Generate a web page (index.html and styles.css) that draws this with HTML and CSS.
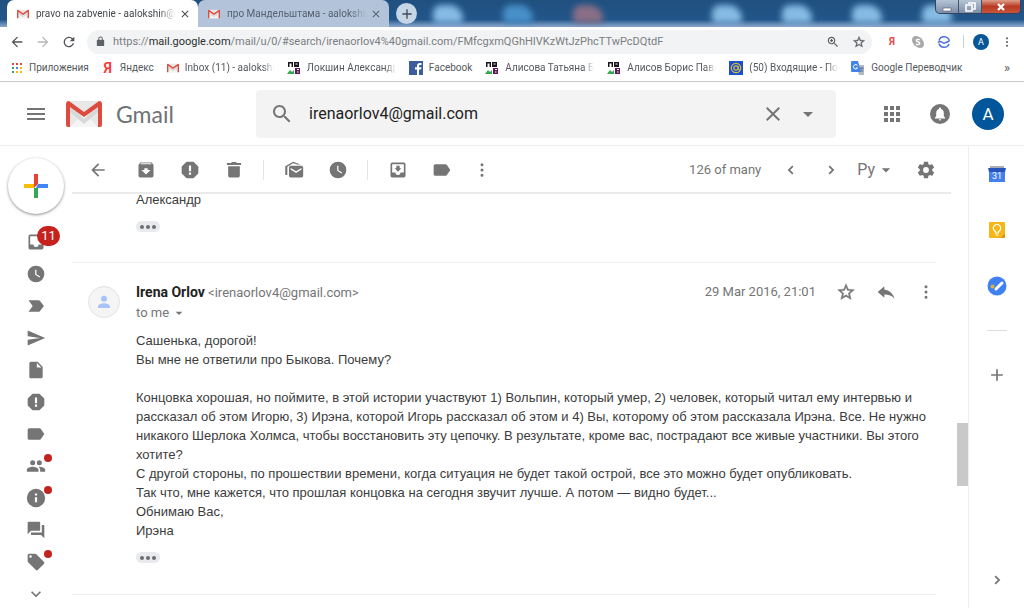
FILE: index.html
```html
<!DOCTYPE html>
<html lang="ru">
<head>
<meta charset="utf-8">
<title>pravo na zabvenie - Gmail</title>
<link rel="stylesheet" href="styles.css">
</head>
<body>
<svg class="defs" aria-hidden="true">
  <symbol id="gm" viewBox="0 0 36 26"><rect x="1" width="34" height="26" rx="2" fill="#e8e8e8"/><path d="M4 26 18 12 32 26z" fill="#f5f5f5"/><path d="M4 5 18 18 32 5v6L18 23 4 11z" fill="#d8d8d8"/><path d="M0 3Q0 0 3 0L18 11 33 0q3 0 3 3v21q0 2-2 2h-2V6L18 16 4 6v20H2q-2 0-2-2z" fill="#dd4b3e"/></symbol>
  <symbol id="back" viewBox="0 0 24 24"><path d="M20 11H7.83l5.59-5.59L12 4l-8 8 8 8 1.41-1.41L7.83 13H20z"/></symbol>
  <symbol id="fwd" viewBox="0 0 24 24"><path d="m12 4-1.41 1.41L16.17 11H4v2h12.17l-5.58 5.59L12 20l8-8z"/></symbol>
  <symbol id="reload" viewBox="0 0 24 24"><path d="M17.65 6.35A8 8 0 1 0 19.73 14h-2.08A6 6 0 1 1 12 6c1.66 0 3.14.69 4.22 1.78L13 11h7V4z"/></symbol>
  <symbol id="lock" viewBox="0 0 24 24"><path d="M18 8h-1V6A5 5 0 0 0 7 6v2H6a2 2 0 0 0-2 2v10c0 1.100.9 2 2 2h12a2 2 0 0 0 2-2V10a2 2 0 0 0-2-2zm-3 0H9V6a3 3 0 0 1 6 0z"/></symbol>
  <symbol id="close" viewBox="0 0 24 24"><path d="M19 6.410 17.590 5 12 10.590 6.410 5 5 6.410 10.590 12 5 17.590 6.410 19 12 13.410 17.590 19 19 17.590 13.410 12z"/></symbol>
  <symbol id="plus" viewBox="0 0 24 24"><path d="M19 13h-6v6h-2v-6H5v-2h6V5h2v6h6z"/></symbol>
  <symbol id="search" viewBox="0 0 24 24"><path d="M15.5 14h-.79l-.28-.27C15.41 12.59 16 11.11 16 9.5 16 5.91 13.09 3 9.5 3S3 5.91 3 9.5 5.91 16 9.5 16c1.61 0 3.09-.59 4.23-1.57l.27.28v.79l5 4.99L20.49 19zm-6 0C7.01 14 5 11.99 5 9.5S7.01 5 9.5 5 14 7.01 14 9.5 11.99 14 9.5 14z"/></symbol>
  <symbol id="zoom" viewBox="0 0 24 24"><use href="#search"/><path d="M8.500 7h2v1.500H12v2h-1.500V12h-2v-1.500H7v-2h1.500z"/></symbol>
  <symbol id="star" viewBox="0 0 24 24"><path d="m22 9.240-7.190-.62L12 2 9.190 8.630 2 9.240l5.460 4.730L5.820 21 12 17.270 18.180 21l-1.630-7.030zM12 15.400l-3.760 2.270 1-4.280-3.320-2.880 4.380-.38L12 6.100l1.710 4.040 4.380.38-3.320 2.880 1 4.280z" stroke="currentColor" stroke-width=".5"/></symbol>
  <symbol id="dots" viewBox="0 0 24 24"><path d="M12 7.500a1.800 1.800 0 1 0 0-3.600 1.800 1.800 0 0 0 0 3.600zm0 2.700a1.800 1.800 0 1 0 0 3.600 1.800 1.800 0 0 0 0-3.600zm0 6.300a1.800 1.800 0 1 0 0 3.600 1.800 1.800 0 0 0 0-3.600z"/></symbol>
  <symbol id="menu" viewBox="0 0 24 24"><path d="M3 18h18v-2H3zm0-5h18v-2H3zm0-7v2h18V6z"/></symbol>
  <symbol id="caret" viewBox="0 0 24 24"><path d="m7 10 5 5 5-5z"/></symbol>
  <symbol id="apps" viewBox="0 0 24 24"><path d="M4 8h4V4H4zm6 12h4v-4h-4zm-6 0h4v-4H4zm0-6h4v-4H4zm6 0h4v-4h-4zm6-10v4h4V4zm-6 4h4V4h-4zm6 6h4v-4h-4zm0 6h4v-4h-4z"/></symbol>
  <symbol id="bell" viewBox="0 0 24 24"><circle cx="12" cy="12" r="10"/><path d="M17 16.500H7v-1l1.200-1.200V11c0-2 1-3.600 2.800-4v-.6a1 1 0 0 1 2 0V7c1.800.4 2.800 2 2.800 4v3.300L17 15.500zM10.800 17.200h2.400a1.200 1.200 0 0 1-2.400 0z" fill="#fff"/></symbol>
  <symbol id="archive" viewBox="0 0 24 24"><path d="m20.540 5.230-1.390-1.680C18.880 3.210 18.470 3 18 3H6c-.47 0-.88.21-1.160.55L3.460 5.230C3.170 5.570 3 6.020 3 6.500V19a2 2 0 0 0 2 2h14a2 2 0 0 0 2-2V6.500c0-.48-.17-.93-.46-1.270zM12 17.500 6.500 12H10v-2h4v2h3.500zM5.120 5l.81-1h12l.94 1z"/></symbol>
  <symbol id="spam" viewBox="0 0 24 24"><path d="M8.270 3h7.460L21 8.270v7.460L15.730 21H8.270L3 15.730V8.270z" stroke="currentColor" stroke-width="2" stroke-linejoin="round"/><path d="M10.700 6.500h2.600v7h-2.600zm0 8.500h2.600v2.600h-2.600z" fill="#fff"/></symbol>
  <symbol id="trash" viewBox="0 0 24 24"><path d="M5 19a2 2 0 0 0 2 2h10a2 2 0 0 0 2-2V7.500H5zM20.500 3.500h-5l-1-1h-5l-1 1h-5V6h17z"/></symbol>
  <symbol id="unread" viewBox="0 0 24 24"><path d="M21 7H8a2 2 0 0 0-2 2v10c0 1 .9 2 2 2h13a2 2 0 0 0 2-2V9a2 2 0 0 0-2-2zm0 4.500-6.500 4-6.500-4v-2l6.500 4 6.500-4zM4 18H1.500V7.500L11 2l9 3.500h-4l-5-1.700L4 8z"/></symbol>
  <symbol id="clock" viewBox="0 0 24 24"><path d="M12 2a10 10 0 1 0 0 20 10 10 0 0 0 0-20zm4.200 14.200L11 13V7h1.500v5.200l4.500 2.700z"/></symbol>
  <symbol id="inbox" viewBox="0 0 24 24"><path d="M19 3H5a2 2 0 0 0-2 2v14c0 1.100.9 2 2 2h14a2 2 0 0 0 2-2V5a2 2 0 0 0-2-2zm0 12h-4a3 3 0 0 1-6 0H5V5h14z"/></symbol>
  <symbol id="moveto" viewBox="0 0 24 24"><path d="M19 3H5a2 2 0 0 0-2 2v14c0 1.100.9 2 2 2h14a2 2 0 0 0 2-2V5a2 2 0 0 0-2-2zm0 12h-4a3 3 0 0 1-6 0H5V5h14zm-3-5h-2V7h-4v3H8l4 4z"/></symbol>
  <symbol id="label" viewBox="0 0 24 24"><path d="M17.630 5.840A2 2 0 0 0 16 5H4a2 2 0 0 0-2 2v10a2 2 0 0 0 2 2h12c.67 0 1.270-.33 1.630-.84L22 12z"/></symbol>
  <symbol id="important" viewBox="0 0 24 24"><path d="M3 19h12c.7 0 1.300-.3 1.600-.8L21.500 12l-4.900-6.200A2 2 0 0 0 15 5H3l5 7z"/></symbol>
  <symbol id="send" viewBox="0 0 24 24"><path d="M2 21 23 12 2 3v7l15 2-15 2z"/></symbol>
  <symbol id="draft" viewBox="0 0 24 24"><path d="M6 2a2 2 0 0 0-2 2v16c0 1.100.9 2 2 2h12a2 2 0 0 0 2-2V8l-6-6zm7 7V3.500L18.500 9z"/></symbol>
  <symbol id="people" viewBox="0 0 24 24"><path d="M16 11a3 3 0 1 0 0-6 3 3 0 0 0 0 6zm-8 0a3 3 0 1 0 0-6 3 3 0 0 0 0 6zm0 2c-2.330 0-7 1.170-7 3.500V19h14v-2.500C15 14.170 10.330 13 8 13zm8 0-.97.05c1.160.84 1.970 1.970 1.970 3.450V19h6v-2.500c0-2.330-4.670-3.500-7-3.500z"/></symbol>
  <symbol id="info" viewBox="0 0 24 24"><path d="M12 1a11 11 0 1 0 0 22 11 11 0 0 0 0-22zm1.300 16h-2.600v-6h2.600zm0-8h-2.600V6.500h2.600z"/></symbol>
  <symbol id="forum" viewBox="0 0 24 24"><path d="M21 6h-2v9H6v2a1 1 0 0 0 1 1h11l4 4V7a1 1 0 0 0-1-1zm-4 6V3a1 1 0 0 0-1-1H3a1 1 0 0 0-1 1v14l4-4h10a1 1 0 0 0 1-1z"/></symbol>
  <symbol id="tag" viewBox="0 0 24 24"><path d="m21.410 11.580-9-9A2 2 0 0 0 11 2H4a2 2 0 0 0-2 2v7c0 .55.22 1.050.59 1.420l9 9a2 2 0 0 0 2.820 0l7-7a2 2 0 0 0 0-2.840zM5.500 7a1.500 1.500 0 1 1 0-3 1.500 1.500 0 0 1 0 3z"/></symbol>
  <symbol id="down" viewBox="0 0 24 24"><path d="M7.410 8.590 12 13.170l4.590-4.580L18 10l-6 6-6-6z"/></symbol>
  <symbol id="left" viewBox="0 0 24 24"><path d="m15 8-4 4 4 4-1.500 1.500L8 12l5.500-5.500z"/></symbol>
  <symbol id="right" viewBox="0 0 24 24"><path d="m9 8 4 4-4 4 1.500 1.500L16 12l-5.500-5.500z"/></symbol>
  <symbol id="gear" viewBox="0 0 24 24"><path d="M19.430 12.980a7.800 7.800 0 0 0 0-1.960l2.110-1.650a.5.5 0 0 0 .12-.64l-2-3.460a.5.5 0 0 0-.61-.22l-2.490 1a7.300 7.300 0 0 0-1.690-.98l-.38-2.650A.49.49 0 0 0 14 2h-4a.49.49 0 0 0-.49.42l-.38 2.650c-.61.25-1.170.59-1.690.98l-2.490-1a.49.49 0 0 0-.61.22l-2 3.460a.5.5 0 0 0 .12.64l2.110 1.650a8 8 0 0 0 0 1.960l-2.110 1.650a.5.5 0 0 0-.12.64l2 3.460c.12.22.39.3.61.22l2.490-1c.52.4 1.080.73 1.690.98l.38 2.650c.03.24.24.42.49.42h4c.25 0 .46-.18.490-.42l.38-2.650c.61-.25 1.170-.59 1.690-.98l2.490 1c.23.09.49 0 .61-.22l2-3.460a.5.5 0 0 0-.12-.64zM12 15.500a3.500 3.500 0 1 1 0-7 3.500 3.500 0 0 1 0 7z"/></symbol>
  <symbol id="reply" viewBox="0 0 24 24"><path d="M10 9V5l-8 7 8 7v-4.100c5 0 9.500 1.600 12 5.100-1-5-5-10-12-11z"/></symbol>
  <symbol id="person" viewBox="0 0 24 24"><path d="M12 11.500a4 4 0 1 0 0-8 4 4 0 0 0 0 8zm0 2c-3 0-8 1.400-8 4.200V20h16v-2.300c0-2.800-5-4.200-8-4.200z"/></symbol>
  <symbol id="site" viewBox="0 0 14 14"><path d="M1 1h5v5H4.500V2.500h-2V6H1zM7 1h5v5H7z" fill="#1b1420"/><path d="M8.500 2.500h2v1h-2z" fill="#fff"/><path d="M8 7h5v6H8z" fill="#5b1a55"/><path d="M10 8h2v1h-2zm0 2.500h1.500v1H10z" fill="#fff"/><path d="m0 13 3-4 2 2 2-2v4z" fill="#33a852"/></symbol>
</svg>

<header class="browser">
  <div class="tabstrip">
    <div class="wallpaper" aria-hidden="true"><i></i><i class="folder"></i><i class="red"></i><i class="gap"></i><i></i><i></i><i></i><i></i></div>
    <div class="tab active"><svg class="i12"><use href="#gm"/></svg><span class="fade">pravo na zabvenie - aalokshin@g</span><button aria-label="Close tab"><svg class="i12"><use href="#close"/></svg></button></div>
    <div class="tab"><svg class="i12"><use href="#gm"/></svg><span class="fade">про Мандельштама - aalokshin</span><button aria-label="Close tab"><svg class="i12"><use href="#close"/></svg></button></div>
    <button class="newtab" aria-label="New tab"><svg class="i16"><use href="#plus"/></svg></button>
    <div class="window-buttons">
      <button aria-label="Minimize"><svg viewBox="0 0 12 12"><path d="M2 7h8v3H2z" fill="#fff" stroke="#556" stroke-width=".6"/></svg></button>
      <button aria-label="Restore"><svg viewBox="0 0 12 12"><path d="M4 2h7v6H9M2 4h6v6H2z" fill="none" stroke="#fff" stroke-width="1.600"/></svg></button>
      <button class="quit" aria-label="Close"><svg viewBox="0 0 12 12"><path d="m3 3 6 6m0-6-6 6" stroke="#fff" stroke-width="2.200"/></svg></button>
    </div>
  </div>
  <div class="navbar">
    <button aria-label="Back"><svg class="i16"><use href="#back"/></svg></button>
    <button class="off" aria-label="Forward"><svg class="i16"><use href="#fwd"/></svg></button>
    <button aria-label="Reload"><svg class="i16"><use href="#reload"/></svg></button>
    <div class="omnibox">
      <svg class="lock"><use href="#lock"/></svg>
      <span class="url">https://<b>mail.google.com</b>/mail/u/0/#search/irenaorlov4%40gmail.com/FMfcgxmQGhHIVKzWtJzPhcTTwPcDQtdF</span>
      <button aria-label="Zoom"><svg class="i14"><use href="#zoom"/></svg></button>
      <button aria-label="Bookmark"><svg class="i14"><use href="#star"/></svg></button>
    </div>
    <div class="extensions">
      <button class="ya" aria-label="Yandex">Я</button>
      <button aria-label="Skype"><svg class="i14" viewBox="0 0 14 14"><rect x="1" y="1" width="8" height="8" rx="4" fill="#aaa"/><rect x="5" y="5" width="8" height="8" rx="4" fill="#aaa"/><circle cx="7" cy="7" r="5" fill="#aaa"/><path d="M9 5Q7 3.700 5.300 5C5 7 9 6.700 8.800 8.600 7.500 10.300 5.500 9.600 5 9" fill="none" stroke="#fff" stroke-width="1.300"/></svg></button>
      <button aria-label="Mail checker"><svg class="i14" viewBox="0 0 14 14"><path d="M2 5.500a5.300 5.300 0 0 1 10.300.7M12 9a5.300 5.300 0 0 1-10-.5M1 7.500q2-2 4-.3t4 .3l3.500-1.500" fill="none" stroke="#4a72d8" stroke-width="1.500"/></svg></button>
      <span class="sep"></span>
      <button class="profile" aria-label="Profile">A</button>
      <button aria-label="Menu"><svg class="i14"><use href="#dots"/></svg></button>
    </div>
  </div>
  <nav class="bookmarks">
    <a href="#"><svg class="i12" viewBox="0 0 12 12"><path d="M1 1h2v2H1zm4 0h2v2H5zm4 0h2v2H9z" fill="#e8453c"/><path d="M1 5h2v2H1zm0 4h2v2H1z" fill="#34a853"/><path d="M5 5h2v2H5z" fill="#4285f4"/><path d="M9 5h2v2H9zM5 9h2v2H5zm4 0h2v2H9z" fill="#f9b90b"/></svg><span>Приложения</span></a>
    <a href="#"><span class="yandex" aria-hidden="true">Я</span><span>Яндекс</span></a>
    <a href="#"><svg class="i12"><use href="#gm"/></svg><span class="fade">Inbox (11) - aalokshin</span></a>
    <a href="#"><svg class="i14"><use href="#site"/></svg><span class="fade">Локшин Александр</span></a>
    <a href="#"><svg class="i14" viewBox="0 0 14 14"><path d="M0 0h14v14H0z" fill="#3f5c9a"/><path d="M8 14V8.500H6V6.300h2V5q0-3 3-3h1.500v2H11q-1 0-1 1v1.300h2.500L12 8.500h-2V14z" fill="#fff"/></svg><span>Facebook</span></a>
    <a href="#"><svg class="i14"><use href="#site"/></svg><span class="fade">Алисова Татьяна Бор</span></a>
    <a href="#"><svg class="i14"><use href="#site"/></svg><span class="fade">Алисов Борис Павло</span></a>
    <a href="#"><svg class="i14" viewBox="0 0 14 14"><path d="M0 0h14v14H0z" fill="#1b4fd0"/><circle cx="7" cy="7" r="4.700" fill="none" stroke="#d7b93c" stroke-width="1.200"/><circle cx="7" cy="7" r="2.200" fill="none" stroke="#d7b93c" stroke-width="1.200"/><path d="M9.200 5v3.500q1 1.200 2-.5" fill="none" stroke="#d7b93c"/></svg><span class="fade">(50) Входящие - Поч</span></a>
    <a href="#"><svg class="i14" viewBox="0 0 14 14"><path d="M5 4h8v10H8z" fill="#b4bac4"/><path d="M1 0h6l3 11H1q-1 0-1-1V1q0-1 1-1z" fill="#4384ea"/><path d="M6.500 4.500A2.200 2.200 0 1 0 6.500 7H5" fill="none" stroke="#fff"/><path d="M9 7h4m-2-1v1q1 3-2 4m0-4 3 4" fill="none" stroke="#59709c" stroke-width=".8"/></svg><span>Google Переводчик</span></a>
    <button class="more">»</button>
  </nav>
</header>

<div class="gmail">
  <header class="topbar">
    <button aria-label="Main menu"><svg class="i24"><use href="#menu"/></svg></button>
    <a class="brand" href="#"><svg class="logo"><use href="#gm"/></svg><span>Gmail</span></a>
    <form class="search" role="search">
      <button type="button" aria-label="Search"><svg class="i24"><use href="#search"/></svg></button>
      <input type="text" aria-label="Search mail" value="irenaorlov4@gmail.com">
      <button type="button" aria-label="Clear"><svg class="i24"><use href="#close"/></svg></button>
      <button type="button" aria-label="Options"><svg class="i24"><use href="#caret"/></svg></button>
    </form>
    <div class="account">
      <button aria-label="Apps"><svg class="i24"><use href="#apps"/></svg></button>
      <button aria-label="Notifications"><svg class="i24"><use href="#bell"/></svg></button>
      <button class="avatar" aria-label="Account">A</button>
    </div>
  </header>

  <div class="columns">
    <nav class="rail">
      <button class="compose" aria-label="Compose"><svg viewBox="0 0 24 24"><path d="M10 0h4v10l-4 4z" fill="#ea4335"/><path d="M0 10h10v4H0z" fill="#fbbc05"/><path d="M14 10h10v4H12z" fill="#4285f4"/><path d="M10 14h4v10h-4z" fill="#34a853"/></svg></button>
      <a href="#" aria-label="Inbox"><svg class="i20"><use href="#inbox"/></svg><span class="count">11</span></a>
      <a href="#" aria-label="Snoozed"><svg class="i20"><use href="#clock"/></svg></a>
      <a href="#" aria-label="Important"><svg class="i20"><use href="#important"/></svg></a>
      <a href="#" aria-label="Sent"><svg class="i20"><use href="#send"/></svg></a>
      <a href="#" aria-label="Drafts"><svg class="i20"><use href="#draft"/></svg></a>
      <a href="#" aria-label="Spam"><svg class="i20"><use href="#spam"/></svg></a>
      <a href="#" aria-label="Label"><svg class="i20"><use href="#label"/></svg></a>
      <a href="#" aria-label="Social"><svg class="i20"><use href="#people"/></svg><span class="dot"></span></a>
      <a href="#" aria-label="Updates"><svg class="i20"><use href="#info"/></svg><span class="dot"></span></a>
      <a href="#" aria-label="Forums"><svg class="i20"><use href="#forum"/></svg></a>
      <a href="#" aria-label="Promotions"><svg class="i20"><use href="#tag"/></svg><span class="dot"></span></a>
      <a href="#" aria-label="More"><svg class="i20"><use href="#down"/></svg></a>
    </nav>

    <main class="main">
      <div class="actions">
        <button aria-label="Back to search"><svg class="i20"><use href="#back"/></svg></button>
        <div class="group">
          <button aria-label="Archive"><svg class="i20"><use href="#archive"/></svg></button>
          <button aria-label="Report spam"><svg class="i20"><use href="#spam"/></svg></button>
          <button aria-label="Delete"><svg class="i20"><use href="#trash"/></svg></button>
        </div>
        <div class="group ruled">
          <button aria-label="Mark as unread"><svg class="i20"><use href="#unread"/></svg></button>
          <button aria-label="Snooze"><svg class="i20"><use href="#clock"/></svg></button>
        </div>
        <div class="group ruled">
          <button aria-label="Move to"><svg class="i20"><use href="#moveto"/></svg></button>
          <button aria-label="Labels"><svg class="i20"><use href="#label"/></svg></button>
          <button class="narrow" aria-label="More"><svg class="i20"><use href="#dots"/></svg></button>
        </div>
        <div class="pager">
          <span>126 of many</span>
          <button aria-label="Newer"><svg class="i20"><use href="#left"/></svg></button>
          <button aria-label="Older"><svg class="i20"><use href="#right"/></svg></button>
          <button class="lang">Ру<svg class="i20"><use href="#caret"/></svg></button>
          <button aria-label="Settings"><svg class="i20"><use href="#gear"/></svg></button>
        </div>
      </div>
      <div class="viewport">
        <div class="thread">
          <article class="previous">
            <p>Александр</p>
            <button class="trimmed" aria-label="Show trimmed content"><i></i><i></i><i></i></button>
          </article>
          <article class="message">
            <div class="photo"><svg><use href="#person"/></svg></div>
            <div class="mail">
              <div class="mailhead">
                <div class="from">
                  <div><strong>Irena Orlov</strong> <span>&lt;irenaorlov4@gmail.com&gt;</span></div>
                  <button class="to">to me<svg class="i16"><use href="#caret"/></svg></button>
                </div>
                <time>29 Mar 2016, 21:01</time>
                <button aria-label="Star"><svg class="i20"><use href="#star"/></svg></button>
                <button aria-label="Reply"><svg class="i20"><use href="#reply"/></svg></button>
                <button aria-label="More"><svg class="i20"><use href="#dots"/></svg></button>
              </div>
              <div class="text">
                <p>Сашенька, дорогой!</p>
                <p>Вы мне не ответили про Быкова. Почему?</p>
                <p><br></p>
                <p>Концовка хорошая, но поймите, в этой истории участвуют 1) Вольпин, который умер, 2) человек, который читал ему интервью и рассказал об этом Игорю, 3) Ирэна, которой Игорь рассказал об этом и 4) Вы, которому об этом рассказала Ирэна. Все. Не нужно никакого Шерлока Холмса, чтобы восстановить эту цепочку. В результате, кроме вас, пострадают все живые участники. Вы этого хотите?</p>
                <p>С другой стороны, по прошествии времени, когда ситуация не будет такой острой, все это можно будет опубликовать.</p>
                <p>Так что, мне кажется, что прошлая концовка на сегодня звучит лучше. А потом — видно будет...</p>
                <p>Обнимаю Вас,</p>
                <p>Ирэна</p>
              </div>
              <button class="trimmed" aria-label="Show trimmed content"><i></i><i></i><i></i></button>
            </div>
          </article>
        </div>
        <div class="scrollbar"><span></span></div>
      </div>
    </main>

    <aside class="panel">
      <button aria-label="Calendar"><svg class="i20" viewBox="0 0 20 20"><path d="M3 2h14v3H3z" fill="#a8adb8"/><path d="M2 5h16v13H2z" fill="#4480ed"/><path d="M1 4h18l-1 4H2z" fill="#2855bd"/><text x="10" y="15" text-anchor="middle" class="day">31</text></svg></button>
      <button aria-label="Keep"><svg class="i20" viewBox="0 0 20 20"><path d="M3 2h14q1 0 1 1v10l-5 5H3q-1 0-1-1V3q0-1 1-1z" fill="#f6b716"/><path d="M18 13v4q0 1-1 1h-4z" fill="#dc9500"/><path d="M8.500 13v-1.500a3.700 3.700 0 1 1 3 0V13zM8.500 15h3" fill="none" stroke="#fff" stroke-width="1.200"/></svg></button>
      <button aria-label="Tasks"><svg class="i20" viewBox="0 0 20 20"><circle cx="10" cy="10" r="9.500" fill="#4080f0"/><path d="m9 13 6-6" stroke="#fff" stroke-width="3" stroke-linecap="round"/><circle cx="5.500" cy="10.500" r="2" fill="#d9b63c"/></svg></button>
      <hr>
      <button aria-label="Add-ons"><svg class="i20"><use href="#plus"/></svg></button>
      <button class="collapse" aria-label="Hide side panel"><svg class="i20"><use href="#right"/></svg></button>
    </aside>
  </div>
</div>
</body>
</html>
```
FILE: styles.css
```css
* { box-sizing: border-box; }
body { margin: 0; height: 100vh; display: flex; flex-direction: column; overflow: hidden; background: #fff; color: #222; font-family: Roboto, "Liberation Sans", sans-serif; font-size: 13px; }
button { display: flex; align-items: center; justify-content: center; margin: 0; padding: 0; border: 0; background: none; color: inherit; font: inherit; flex: none; }
a { color: inherit; text-decoration: none; }
p { margin: 0; }
svg { display: block; flex: none; fill: currentColor; }
.defs { position: absolute; width: 0; height: 0; }
.i12 { width: 12px; height: 12px; }
.i14 { width: 14px; height: 14px; }
.i16 { width: 16px; height: 16px; }
.i20 { width: 20px; height: 20px; }
.i24 { width: 24px; height: 24px; }

/* Browser frame */
.browser { flex: none; font-family: Roboto, "Open Sans", sans-serif; font-size: 10px; color: #55585c; border-bottom: 1px solid #c8c8c8; }
.tabstrip { position: relative; display: flex; height: 27px; padding-left: 7px; background: linear-gradient(#20507f 0, #22558a 72%, #7f9fc5 96%); overflow: hidden; }
.wallpaper { position: absolute; inset: 0 72px 0 433px; display: flex; justify-content: space-between; align-items: center; }
.wallpaper i { width: 30px; height: 18px; border-radius: 8px 14px 4px 4px; background: #86bbe4; filter: blur(3px); }
.wallpaper .folder { background: #4690c8; }
.wallpaper .red { background: #8a6f86; }
.wallpaper .gap { background: none; }
.tab { position: relative; display: flex; align-items: center; gap: 7px; width: 191px; padding: 0 7px 0 10px; border-radius: 7px 7px 0 0; background: #b3c4da; color: #56606f; }
.tab.active { background: #fff; color: #44474b; }
.fade { flex: 1; min-width: 0; overflow: hidden; white-space: nowrap; mask-image: linear-gradient(90deg, #000 88%, transparent); }
.tab .fade { margin-right: -4px; }
.newtab { position: relative; width: 21px; height: 21px; margin: 3px 0 0 7px; border-radius: 50%; background: #c5d6e6; color: #414b57; }
.window-buttons { position: relative; display: flex; height: 14px; margin: 0 3px 0 auto; border: 1px solid #34445d; border-top: 0; border-radius: 0 0 5px 5px; overflow: hidden; background: linear-gradient(#b6c4d5, #7b8ea8); }
.window-buttons button { width: 23px; border-right: 1px solid #42536c; }
.window-buttons svg { width: 12px; height: 12px; }
.window-buttons .quit { width: 38px; border: 0; background: linear-gradient(#dda08d, #b93a22 50%, #c9543b); }
.navbar { display: flex; align-items: center; height: 29px; padding: 0 10px 0 9px; color: #5f6368; }
.navbar > button { width: 16px; margin-right: 10px; color: #505357; }
.navbar > .off { color: #b5b7b9; }
.omnibox { flex: 1; display: flex; align-items: center; height: 24px; padding: 0 0 0 8px; border-radius: 12px; background: #f1f3f4; }
.lock { width: 11px; height: 11px; }
.omnibox button { width: 26px; }
.url { flex: 1; margin-left: 7px; font-size: 11px; color: #7b7e82; white-space: nowrap; overflow: hidden; }
.url b { font-weight: 400; color: #2d2f31; }
.extensions { display: flex; align-items: center; }
.extensions button { width: 26px; }
.extensions .ya { margin-left: 7px; font-weight: 700; color: #e5484a; }
.extensions .sep { width: 1px; height: 13px; margin: 0 9px 0 6px; background: #bcd5ee; }
.extensions .profile { width: 16px; height: 16px; margin-right: 6px; border-radius: 50%; background: #075798; color: #fff; font-size: 9px; }
.extensions button:last-child { width: 24px; margin-right: -5px; }
.bookmarks { display: flex; align-items: center; gap: 13px; height: 25px; padding: 0 14px 2px 11px; }
.bookmarks a { display: flex; align-items: center; gap: 6px; white-space: nowrap; }
.bookmarks .fade { flex: none; width: 89px; }
.yandex { width: 12px; text-align: center; color: #f33; font-size: 14px; font-weight: 600; line-height: 14px; }
.more { margin-left: auto; font-size: 13px; }

/* Header */
.gmail { flex: 1; min-height: 0; display: flex; flex-direction: column; color: #757575; }
.topbar { flex: none; display: flex; align-items: center; height: 64px; padding: 0 20px 0 24px; border-bottom: 1px solid #ececec; }
.brand { display: flex; align-items: center; gap: 14px; width: 190px; margin-left: 18px; font-family: Lato, sans-serif; font-size: 23px; color: #6f7276; }
.logo { width: 36px; height: 26px; }
.search { flex: 1; max-width: 580px; display: flex; align-items: center; height: 48px; padding: 0 16px 0 14px; gap: 11px; border-radius: 4px; background: #f3f3f3; }
.search input { flex: 1; min-width: 0; padding: 0 4px; border: 0; outline: 0; background: none; font: 16px Roboto, sans-serif; color: #222; }
.account { display: flex; align-items: center; gap: 24px; margin-left: auto; }
.account .avatar { width: 32px; height: 32px; margin-left: -4px; border-radius: 50%; background: #00569b; color: #fff; font-size: 17px; }

/* Columns */
.columns { flex: 1; min-height: 0; display: flex; }
.rail { flex: none; width: 72px; display: flex; flex-direction: column; align-items: center; padding-top: 12px; }
.rail a { position: relative; flex: none; display: flex; align-items: center; height: 32px; }
.compose { width: 56px; height: 56px; margin-bottom: 12px; border-radius: 50%; box-shadow: 0 1px 3px rgba(0, 0, 0, .45); }
.compose svg { width: 24px; height: 24px; }
.count { position: absolute; left: 11px; top: 0; width: 23px; height: 20px; border-radius: 10px; background: #c5221f; color: #fff; text-align: center; line-height: 20px; }
.dot { position: absolute; left: 18px; top: 4px; width: 8px; height: 8px; border-radius: 50%; background: #c5221f; }
.main { flex: 1; min-width: 0; display: flex; flex-direction: column; }
.actions { flex: none; display: flex; align-items: center; height: 48px; margin-right: 17px; padding: 1px 15px 0 16px; border-bottom: 2px solid #eaeaea; }
.group { display: flex; gap: 24px; margin-left: 28px; }
.ruled { margin-left: 19px; padding-left: 20px; border-left: 1px solid #e4e4e4; }
.narrow { margin-left: -4px; }
.pager { display: flex; align-items: center; gap: 20px; margin-left: auto; }
.lang { gap: 1px; margin-left: -4px; font-size: 16px; }
.viewport { flex: 1; min-height: 0; display: flex; justify-content: space-between; }
.thread { flex: 1; margin-right: 21px; overflow: hidden; font-family: "Liberation Sans", Arial, sans-serif; color: #3c3c3c; }
.thread p { line-height: 19px; min-height: 19px; }
.previous { height: 73px; padding-left: 64px; border-bottom: 1px solid #efefef; }
.previous p { margin-top: -4px; }
.trimmed { gap: 2px; width: 24px; height: 11px; margin-top: 12px; border-radius: 6px; background: #e8eaed; }
.trimmed i { width: 4px; height: 4px; border-radius: 50%; background: #6b6d70; }
.message { display: flex; padding: 16px 0 31px 16px; border-bottom: 1px solid #efefef; }
.photo { display: flex; flex: none; align-items: center; justify-content: center; width: 32px; height: 32px; margin: 7px 16px 0 0; border: 1px solid #e3e3e3; border-radius: 50%; background: #f5f5f5; color: #a8c4f7; }
.photo svg { width: 18px; height: 18px; }
.mail { flex: 1; min-width: 0; }
.mailhead { display: flex; align-items: flex-start; margin-bottom: 9px; color: #757575; font-family: Roboto, sans-serif; line-height: 20px; padding-top: 3px; }
.from { flex: 1; }
.from strong { font-size: 14px; color: #222; }
.to { line-height: 19px; gap: 2px; }
.mailhead time { margin-right: 20px; }
.mailhead > button { width: 20px; margin-left: 20px; }
.mailhead > time + button { margin-left: 0; }
.scrollbar { flex: none; width: 11px; padding-top: 229px; }
.scrollbar span { display: block; height: 63px; background: #c9c9c9; }
.panel { flex: none; width: 56px; display: flex; flex-direction: column; align-items: center; padding: 18px 0; border-left: 1px solid #eee; }
.panel button { height: 20px; margin-bottom: 36px; }
.day { fill: #fff; font: 9px Roboto, sans-serif; }
.panel hr { width: 20px; margin: -2px 0 34px; border: 0; border-top: 1px solid #ddd; }
.panel .collapse { margin: auto 0 0; }
```
